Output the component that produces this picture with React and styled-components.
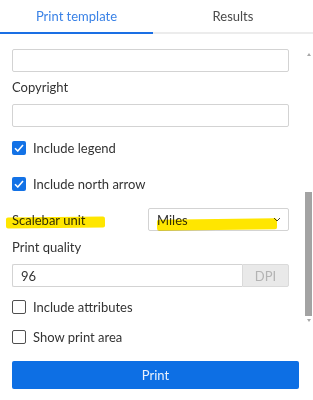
import React from 'react';
import styled, { createGlobalStyle } from 'styled-components';

const GlobalStyle = createGlobalStyle`
  html, body {
    margin: 0;
    padding: 0;
    background: #fff;
  }
  body {
    font-family: Lato, "Liberation Sans", sans-serif;
    color: #333;
    font-size: 13px;
  }
`;

const Panel = styled.div`
  position: relative;
  width: 313px;
  height: 400px;
  overflow: hidden;
`;

const TabBar = styled.div`
  display: flex;
  height: 32px;
  border-bottom: 2px solid #ececec;
`;

const Tab = styled.div`
  flex: 0 0 ${p => p.w}px;
  display: flex;
  align-items: center;
  justify-content: center;
  font-size: 13px;
  color: ${p => (p.active ? '#3a82e6' : '#4a4a4a')};
  box-shadow: ${p => (p.active ? 'inset 0 -2px 0 #1a6fe4' : 'none')};
  margin-bottom: -2px;
  height: 34px;
  padding-bottom: 2px;
  box-sizing: border-box;
`;

const Form = styled.div`
  display: flex;
  flex-direction: column;
  padding: 15px 24px 0 12px;
`;

const TextInput = styled.div`
  box-sizing: border-box;
  height: 23px;
  border: 1px solid #d3d3d3;
  border-radius: 2px;
  background: #fff;
`;

const Label = styled.div`
  line-height: 18px;
  margin-top: ${p => p.mt || 0}px;
  margin-bottom: ${p => p.mb || 0}px;
`;

const CheckRow = styled.div`
  display: flex;
  align-items: center;
  gap: 7px;
  height: 20px;
  margin-top: ${p => p.mt}px;
`;

const Box = styled.span`
  box-sizing: border-box;
  width: 14px;
  height: 14px;
  border-radius: 2px;
  display: flex;
  align-items: center;
  justify-content: center;
  background: ${p => (p.checked ? '#1372e6' : '#fff')};
  border: ${p => (p.checked ? 'none' : '1.5px solid #4f4f4f')};
`;

const ScaleRow = styled.div`
  display: flex;
  align-items: center;
  justify-content: space-between;
  margin-top: 14px;
  height: 23px;
`;

const Select = styled.div`
  box-sizing: border-box;
  width: 141px;
  height: 23px;
  border: 1px solid #d3d3d3;
  border-radius: 2px;
  display: flex;
  align-items: center;
  justify-content: space-between;
  padding: 0 7px 0 8px;
`;

const Marked = styled.span`
  position: relative;
  &::after {
    content: '';
    position: absolute;
    left: ${p => p.l}px;
    width: ${p => p.w}px;
    top: ${p => p.t}px;
    height: 11px;
    background: #ffe600;
    mix-blend-mode: multiply;
    transform: rotate(${p => p.rot}deg);
    border-radius: 2px;
  }
`;

const InputGroup = styled.div`
  display: flex;
  height: 23px;
  box-sizing: border-box;
`;

const NumberField = styled.div`
  flex: 1;
  box-sizing: border-box;
  border: 1px solid #d3d3d3;
  border-right: none;
  border-radius: 2px 0 0 2px;
  display: flex;
  align-items: center;
  padding-left: 8px;
`;

const Addon = styled.div`
  width: 47px;
  box-sizing: border-box;
  background: #e9e9e9;
  border: 1px solid #dadada;
  border-radius: 0 2px 2px 0;
  color: #b3b3b3;
  display: flex;
  align-items: center;
  justify-content: center;
`;

const PrintButton = styled.button`
  margin: 14px -10px 0 0;
  height: 28px;
  border: none;
  border-radius: 2px;
  background: #0d6fe4;
  color: #eaf2fd;
  font-family: inherit;
  font-size: 13px;
`;

const Scrollbar = styled.div`
  position: absolute;
  left: 305px;
  top: 50px;
  width: 7px;
  height: 272px;
  display: flex;
  flex-direction: column;
  align-items: center;
`;

const Arrow = styled.div`
  width: 0;
  height: 0;
  border-left: 2.5px solid transparent;
  border-right: 2.5px solid transparent;
  ${p => (p.up ? 'border-bottom: 3px solid #a8a8a8;' : 'border-top: 3px solid #a8a8a8;')}
  margin: ${p => (p.up ? '3px 0 0' : '2px 0 0')};
`;

const Track = styled.div`
  flex: 1;
  width: 7px;
  display: flex;
  flex-direction: column;
  justify-content: flex-end;
`;

const Thumb = styled.div`
  width: 7px;
  height: 124px;
  background: #a3a3a3;
  margin-bottom: 1px;
`;

const Check = () => (
  <svg width="10" height="8" viewBox="0 0 10 8">
    <path d="M1 4.2 L3.8 7 L9 1" fill="none" stroke="#fff" strokeWidth="1.6" />
  </svg>
);

const CheckItem = ({ checked, mt, children }) => (
  <CheckRow mt={mt}>
    <Box checked={checked}>{checked && <Check />}</Box>
    <span>{children}</span>
  </CheckRow>
);

export default function App() {
  return (
    <Panel>
      <GlobalStyle />
      <TabBar>
        <Tab w={153} active>Print template</Tab>
        <Tab w={160}>Results</Tab>
      </TabBar>
      <Form>
        <TextInput />
        <Label mt={6} mb={8}>Copyright</Label>
        <TextInput />
        <CheckItem checked mt={11}>Include legend</CheckItem>
        <CheckItem checked mt={16}>Include north arrow</CheckItem>
        <ScaleRow>
          <Marked l={-6} w={99} t={5} rot={-0.6}>Scalebar unit</Marked>
          <Select>
            <Marked l={0} w={120} t={7} rot={-0.8}>Miles</Marked>
            <svg width="8" height="5" viewBox="0 0 8 5">
              <path d="M1 1 L4 4 L7 1" fill="none" stroke="#444" strokeWidth="1" />
            </svg>
          </Select>
        </ScaleRow>
        <Label mt={7} mb={8}>Print quality</Label>
        <InputGroup>
          <NumberField>96</NumberField>
          <Addon>DPI</Addon>
        </InputGroup>
        <CheckItem mt={10}>Include attributes</CheckItem>
        <CheckItem mt={10}>Show print area</CheckItem>
        <PrintButton>Print</PrintButton>
      </Form>
      <Scrollbar>
        <Arrow up />
        <Track>
          <Thumb />
        </Track>
        <Arrow />
      </Scrollbar>
    </Panel>
  );
}
